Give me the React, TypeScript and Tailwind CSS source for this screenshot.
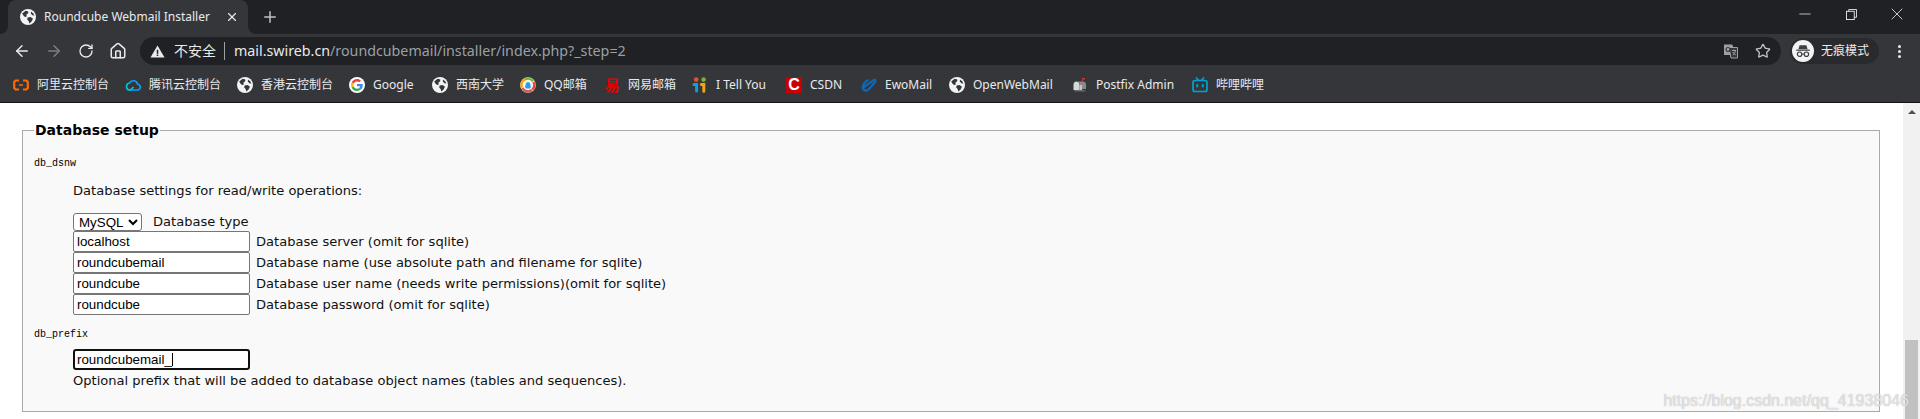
import { ArrowLeft, ArrowRight, House, Minus, Plus, RotateCw, Star, X } from 'lucide-react';

const uiFont = 'font-["Noto_Sans","Noto_Sans_CJK_SC",sans-serif]';

function Globe({ className = 'h-4 w-4' }: { className?: string }) {
  return (
    <svg viewBox="0 0 16 16" className={className}>
      <circle cx="8" cy="8" r="8" fill="#f1f3f4" />
      <path d="M2.2 4.4 5.6 1.7 8.4 2.4 8 4.6 6.4 5.6 6.8 7.4 5 8 3.4 6.4Z" fill="#35363a" />
      <path d="M7.6 8.4 10.6 8 13 9.8 11.6 12.6 9.4 14.4 8.6 12 7.2 10.6Z" fill="#35363a" />
      <path d="M11 2.4 13.4 4.4 14.4 6.6 12.4 6.2 10.8 4.4Z" fill="#35363a" />
    </svg>
  );
}

function AliyunIcon() {
  return (
    <svg viewBox="0 0 16 16" className="h-4 w-4" fill="none" stroke="#ff6a00" strokeWidth="2.2">
      <path d="M6 3.5H2.6L1.2 5v6l1.4 1.5H6" />
      <path d="M10 3.5h3.4L14.8 5v6l-1.4 1.5H10" />
      <path d="M6 8h4" strokeWidth="1.5" />
    </svg>
  );
}

function TencentCloudIcon() {
  return (
    <svg viewBox="0 0 16 16" className="h-4 w-4" fill="none" strokeWidth="1.6">
      <path d="M4 13h8.2a2.9 2.9 0 0 0 .4-5.8A4.3 4.3 0 0 0 4.6 6" stroke="#00a4ff" />
      <path d="M4.6 6A3.6 3.6 0 0 0 4 13c2 0 3.4-1.6 4.6-3" stroke="#00c8dc" />
    </svg>
  );
}

function GoogleIcon() {
  return (
    <span className="flex h-4 w-4 items-center justify-center rounded-full bg-white">
      <svg viewBox="0 0 48 48" className="h-3 w-3">
        <path fill="#EA4335" d="M24 9.5c3.5 0 6.7 1.2 9.2 3.6l6.9-6.9C35.9 2.4 30.5 0 24 0 14.6 0 6.5 5.4 2.6 13.2l8 6.2C12.4 13.7 17.7 9.5 24 9.5z" />
        <path fill="#4285F4" d="M47 24.5c0-1.6-.1-3.1-.4-4.5H24v9h12.9c-.6 3-2.2 5.5-4.7 7.2l7.7 6c4.5-4.2 7.1-10.3 7.1-17.7z" />
        <path fill="#FBBC05" d="M10.5 28.6c-.5-1.4-.8-3-.8-4.6s.3-3.2.8-4.6l-8-6.2C.9 16.5 0 20.1 0 24s.9 7.5 2.6 10.8l7.9-6.2z" />
        <path fill="#34A853" d="M24 48c6.5 0 11.9-2.1 15.9-5.8l-7.7-6c-2.1 1.4-4.9 2.3-8.2 2.3-6.3 0-11.6-4.2-13.5-9.9l-8 6.2C6.5 42.6 14.6 48 24 48z" />
      </svg>
    </span>
  );
}

function QQMailIcon() {
  return (
    <svg viewBox="0 0 16 16" className="h-4 w-4" fill="none">
      <circle cx="8" cy="8" r="7.8" fill="#f4f4f4" />
      <path d="M2 10.5A6.4 6.4 0 0 1 5 2.4" stroke="#f5a800" strokeWidth="2.4" />
      <path d="M5 2.4a6.4 6.4 0 0 1 8 1.8" stroke="#6fb92c" strokeWidth="2.4" />
      <path d="M13.4 5a6.4 6.4 0 0 1-1 7.6" stroke="#e8442e" strokeWidth="2.4" />
      <path d="M12 13a6.4 6.4 0 0 1-9.6-2" stroke="#d9534f" strokeWidth="2.4" />
      <path d="M5.4 11c-.4-3 .6-6 2.6-6s3 3 2.6 6c-1.6.8-3.6.8-5.2 0z" fill="#2d9be8" />
    </svg>
  );
}

function NeteaseIcon() {
  return <span className="flex h-4 w-4 items-center justify-center text-[15px] font-bold leading-none text-[#e60000]">易</span>;
}

function ITellYouIcon() {
  return (
    <svg viewBox="0 0 16 16" className="h-4 w-4" fill="none" strokeWidth="3" strokeLinecap="round">
      <circle cx="4.2" cy="2.6" r="2.3" fill="#e8502a" />
      <circle cx="11.6" cy="2.6" r="2.3" fill="#72b626" />
      <path d="M2 7.6h2.6v6.4" stroke="#139cd8" />
      <path d="M9.4 7.6h2.4v6.6" stroke="#f0a313" />
    </svg>
  );
}

function CsdnIcon() {
  return (
    <span className="flex h-4 w-4 items-center justify-center bg-[#c80000] font-['Liberation_Sans',sans-serif] text-[16px] font-bold leading-none text-white">
      C
    </span>
  );
}

function EwoMailIcon() {
  return (
    <svg viewBox="0 0 16 16" className="h-4 w-4" fill="none" stroke="#0f68b4" strokeWidth="2.2" strokeLinecap="round">
      <path d="M3 10 12.5 3.2c1.6-1.2 2.6.4 1.4 2L8 12c-2 2.2-5.4 2.2-6-.4C1.4 8.800 3.400 4.800 6.600 3.200" />
    </svg>
  );
}

function PostfixIcon() {
  return (
    <svg viewBox="0 0 16 16" className="h-4 w-4">
      <path d="M1.500 7.500c0-2 1.500-3 3-3s3 1 3 3V13h-6z" fill="#d8d8d8" />
      <path d="M6 4.500h5c1.500 0 3 1 3 3V12H7.500V7.500C7.500 6 7 5 6 4.500z" fill="#8a8a8a" />
      <path d="M7.500 8h2.500v6H7.500z" fill="#c4c4c4" />
      <path d="M10 1h1v4h-1z" fill="#c0392b" />
      <path d="M10 1h3v1.600h-3z" fill="#c0392b" />
      <path d="M3 13h9l2 1.500H2z" fill="#6b6b6b" />
    </svg>
  );
}

function BilibiliIcon() {
  return (
    <svg viewBox="0 0 16 16" className="h-4 w-4" fill="none" stroke="#00a1d6" strokeWidth="1.700" strokeLinecap="round">
      <rect x="1" y="3.500" width="14" height="11" rx="2" />
      <path d="M4.500 1 6.500 3.300M11.500 1 9.500 3.300" />
      <path d="M5.200 8v1.400M10.800 8v1.400" strokeWidth="2" />
    </svg>
  );
}

function TranslateIcon() {
  return (
    <svg viewBox="0 0 16 16" className="h-4 w-4">
      <path d="M1 1.500h8l1 1.500v9H1z" fill="#9aa0a6" />
      <path d="M6 4.500h8.500v10.500H8z" fill="#35363a" stroke="#9aa0a6" strokeWidth="1" />
      <circle cx="5" cy="6.500" r="2" fill="none" stroke="#35363a" strokeWidth="1.200" />
      <path d="M9 7.500h4M11 6.500v1M9.800 12c1.600-1 2.400-2.400 2.600-4.500M9.800 9c.6 1.200 1.600 2.200 3 3" fill="none" stroke="#9aa0a6" strokeWidth="1" />
    </svg>
  );
}

function IncognitoIcon() {
  return (
    <span className="flex h-[22px] w-[22px] items-center justify-center rounded-full bg-[#f1f3f4]">
      <svg viewBox="0 0 16 16" className="h-4 w-4" fill="#3c4043">
        <path d="M4.600 2.200h6.800l1.200 4H3.400z" />
        <path d="M1.200 6.600h13.600v1.200H1.200z" />
        <circle cx="4.600" cy="11.200" r="2.200" fill="none" stroke="#3c4043" strokeWidth="1.200" />
        <circle cx="11.400" cy="11.200" r="2.200" fill="none" stroke="#3c4043" strokeWidth="1.200" />
        <path d="M6.800 10.600h2.400v1H6.800z" />
      </svg>
    </span>
  );
}

function WarningIcon() {
  return (
    <svg viewBox="0 0 16 16" className="h-[15px] w-[15px]">
      <path d="M8 1.500 15.500 14.500H.5z" fill="#e8eaed" />
      <path d="M7.200 6h1.600v4.500H7.200zM7.200 11.300h1.600v1.600H7.200z" fill="#202124" />
    </svg>
  );
}

function RestoreIcon() {
  return (
    <svg viewBox="0 0 12 12" className="h-[11px] w-[11px]" fill="none" stroke="#e8eaed" strokeWidth="1">
      <rect x="0.500" y="2.500" width="8.500" height="9" />
      <path d="M3 2.500V.5h8.500v8.500H9" />
    </svg>
  );
}

const bookmarks = [
  { label: '阿里云控制台', icon: <AliyunIcon />, width: 'w-[72px]' },
  { label: '腾讯云控制台', icon: <TencentCloudIcon />, width: 'w-[72px]' },
  { label: '香港云控制台', icon: <Globe />, width: 'w-[72px]' },
  { label: 'Google', icon: <GoogleIcon />, width: 'w-[43px]' },
  { label: '西南大学', icon: <Globe />, width: 'w-[48px]' },
  { label: 'QQ邮箱', icon: <QQMailIcon />, width: 'w-[44px]' },
  { label: '网易邮箱', icon: <NeteaseIcon />, width: 'w-[48px]' },
  { label: 'I Tell You', icon: <ITellYouIcon />, width: 'w-[54px]' },
  { label: 'CSDN', icon: <CsdnIcon />, width: 'w-[35px]' },
  { label: 'EwoMail', icon: <EwoMailIcon />, width: 'w-[48px]' },
  { label: 'OpenWebMail', icon: <Globe />, width: 'w-[83px]' },
  { label: 'Postfix Admin', icon: <PostfixIcon />, width: 'w-[80px]' },
  { label: '哔哩哔哩', icon: <BilibiliIcon />, width: 'w-[48px]' },
];

const dbFields = [
  { value: 'localhost', hint: 'Database server (omit for sqlite)' },
  { value: 'roundcubemail', hint: 'Database name (use absolute path and filename for sqlite)' },
  { value: 'roundcube', hint: 'Database user name (needs write permissions)(omit for sqlite)' },
  { value: 'roundcube', hint: 'Database password (omit for sqlite)' },
];

function BrowserChrome() {
  return (
    <div className={`${uiFont} text-[#e8eaed]`}>
      {/* Tab strip */}
      <div className="flex h-[34px] bg-[#202124]">
        <div className="w-2 bg-[#35363a]">
          <div className="h-full rounded-br-lg bg-[#202124]" />
        </div>
        <div className="flex w-[240px] items-center rounded-t-lg bg-[#35363a] pl-3 pr-[9px]">
          <Globe />
          <span className="ml-2 flex-1 whitespace-nowrap text-[12px]">Roundcube Webmail Installer</span>
          <X className="h-[14px] w-[14px]" strokeWidth={2} />
        </div>
        <div className="w-2 bg-[#35363a]">
          <div className="h-full rounded-bl-lg bg-[#202124]" />
        </div>
        <div className="ml-[5px] flex items-center">
          <Plus className="h-[18px] w-[18px] text-[#bdc1c6]" strokeWidth={2} />
        </div>
        <div className="flex flex-1 items-start justify-end">
          <div className="flex h-[28px] w-[46px] items-center justify-center"><Minus className="h-[18px] w-[18px]" strokeWidth={1} /></div>
          <div className="flex h-[28px] w-[46px] items-center justify-center"><RestoreIcon /></div>
          <div className="flex h-[28px] w-[46px] items-center justify-center"><X className="h-[20px] w-[20px]" strokeWidth={1} /></div>
        </div>
      </div>

      {/* Toolbar */}
      <div className="flex h-[34px] items-center bg-[#35363a] pl-[6px]">
        <div className="flex h-8 w-8 items-center justify-center"><ArrowLeft className="h-[18px] w-[18px]" strokeWidth={2} /></div>
        <div className="flex h-8 w-8 items-center justify-center"><ArrowRight className="h-[18px] w-[18px] text-[#7b7e83]" strokeWidth={2} /></div>
        <div className="flex h-8 w-8 items-center justify-center"><RotateCw className="h-[16px] w-[16px]" strokeWidth={2} /></div>
        <div className="flex h-8 w-8 items-center justify-center"><House className="h-[18px] w-[18px]" strokeWidth={2} /></div>
        <div className="ml-[6px] flex h-[28px] flex-1 items-center rounded-full bg-[#202124] pl-[10px] pr-[10px]">
          <WarningIcon />
          <span className="ml-[9px] text-[14px] leading-none">不安全</span>
          <span className="ml-2 h-[18px] w-px bg-[#9aa0a6]" />
          <span className="ml-[9px] whitespace-nowrap text-[14.25px] leading-none">
            mail.swireb.cn<span className="text-[#9aa0a6]">/roundcubemail/installer/index.php?_step=2</span>
          </span>
          <span className="flex-1" />
          <TranslateIcon />
          <Star className="ml-4 h-4 w-4 text-[#bdc1c6]" strokeWidth={2} />
        </div>
        <div className="ml-[9px] flex h-[26px] w-[89px] items-center rounded-full bg-[#292a2d] pl-[2px]">
          <IncognitoIcon />
          <span className="ml-[7px] text-[12px] leading-none">无痕模式</span>
        </div>
        <div className="flex w-[41px] flex-col items-center gap-[2px] pr-0">
          <span className="h-[3px] w-[3px] rounded-full bg-[#e8eaed]" />
          <span className="h-[3px] w-[3px] rounded-full bg-[#e8eaed]" />
          <span className="h-[3px] w-[3px] rounded-full bg-[#e8eaed]" />
        </div>
      </div>

      {/* Bookmarks bar */}
      <div className="flex h-[34px] items-center gap-4 bg-[#35363a] pl-[13px]">
        {bookmarks.map((b) => (
          <div key={b.label} className="flex items-center gap-2">
            {b.icon}
            <span className={`${b.width} whitespace-nowrap text-[12px] leading-none`}>{b.label}</span>
          </div>
        ))}
      </div>
      <div className="h-px bg-[#111214]" />
    </div>
  );
}

function Scrollbar() {
  return (
    <div className="flex w-[17px] flex-col items-center bg-[#f1f1f1]">
      <div className="mt-[7px] h-0 w-0 border-x-[4px] border-b-[4px] border-x-transparent border-b-[#505050]" />
      <div className="mt-[226px] h-full w-[13px] bg-[#c1c1c1]" />
    </div>
  );
}

export default function App() {
  return (
    <div className="flex h-[419px] w-[1920px] flex-col overflow-hidden bg-white">
      <BrowserChrome />
      <div className="relative flex flex-1 overflow-hidden">
        <main className="flex-1 pl-[22px] pr-[23px] pt-[18px] font-['DejaVu_Sans',Verdana,sans-serif] text-[13.05px] text-[#111]">
          <fieldset className="h-[291px] border border-[#aaaaaa] bg-[#f9f9f9] pl-[11px]">
            <legend className="px-px text-[14px] font-bold leading-[18px] text-black">Database setup</legend>
            <div className="mt-[19px] font-['Liberation_Mono',monospace] text-[10px] leading-[12px] text-black">db_dsnw</div>
            <div className="ml-[39px] mt-[14px] leading-[14px]">Database settings for read/write operations:</div>
            <div className="ml-[39px] mt-[14px] flex h-[19px] items-center">
              <select className="h-[18px] w-[69px] rounded-[3px] border border-[#767676] bg-white pl-px font-['Liberation_Sans',sans-serif] text-[13.33px] leading-none text-black">
                <option>MySQL</option>
              </select>
              <span className="ml-[11px]">Database type</span>
            </div>
            <div className="ml-[39px] flex flex-col">
              {dbFields.map((f) => (
                <div key={f.hint} className="flex h-[21px] items-center">
                  <input
                    readOnly
                    value={f.value}
                    className="h-[21px] w-[177px] rounded-[2px] border border-[#767676] bg-white px-[3px] font-['Liberation_Sans',sans-serif] text-[13.33px] text-black"
                  />
                  <span className="ml-[6px] whitespace-nowrap">{f.hint}</span>
                </div>
              ))}
            </div>
            <div className="mt-[14px] font-['Liberation_Mono',monospace] text-[10px] leading-[12px] text-black">db_prefix</div>
            <div className="relative ml-[39px] mt-[8px] h-[21px] w-[177px]">
              <input
                readOnly
                value="roundcubemail_"
                className="h-full w-full rounded-[3px] border-2 border-[#101010] bg-white px-[2px] font-['Liberation_Sans',sans-serif] text-[13.33px] text-black"
              />
              <span className="absolute left-[99px] top-[4px] h-[13px] w-px bg-black" />
            </div>
            <div className="ml-[39px] mt-[4px] leading-[14px]">Optional prefix that will be added to database object names (tables and sequences).</div>
          </fieldset>
        </main>
        <Scrollbar />
        {/* csdn watermark */}
        <span className="absolute bottom-[10px] right-[11px] font-['Liberation_Sans',sans-serif] text-[16px] leading-none text-white/70 [text-shadow:0_0_1px_#999]">
          https://blog.csdn.net/qq_41938046
        </span>
      </div>
    </div>
  );
}
